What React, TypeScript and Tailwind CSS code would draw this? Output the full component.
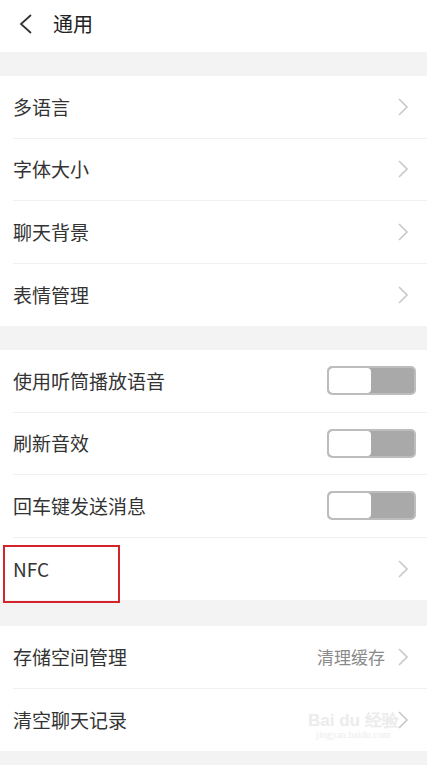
import React from "react";

const font = { fontFamily: '"Noto Sans CJK SC", "Noto Sans", sans-serif' };

function Chevron() {
  return (
    <svg width="12" height="20" viewBox="0 0 12 20" className="shrink-0">
      <path d="M2 2 L10 10 L2 18" fill="none" stroke="#c8c8c8" strokeWidth="1.6" />
    </svg>
  );
}

function Toggle() {
  return (
    <div className="flex h-[29px] w-[89px] overflow-hidden rounded-[5px] border-2 border-[#bdbdbd] bg-[#a9a9a9]">
      <div className="h-full w-[42px] rounded-[4px] bg-white" />
    </div>
  );
}

function Row({ label, right, last, children }: { label: string; right?: React.ReactNode; last?: boolean; children?: React.ReactNode }) {
  return (
    <div className="relative pl-[13px]">
      <div className={`flex h-[62.5px] items-center justify-between pr-[18px] ${last ? "" : "border-b border-[#f0f0f0]"}`}>
        <span className="text-[19px] text-[#333]">{label}</span>
        {right}
      </div>
      {children}
    </div>
  );
}

export default function App() {
  return (
    <div className="relative min-h-[765px] w-[427px] bg-[#f3f3f3]" style={font}>
      <div className="flex h-[52px] items-center bg-white pb-[4px] pl-[18px]">
        <svg width="16" height="22" viewBox="0 0 16 22">
          <path d="M13 2 L3 11 L13 20" fill="none" stroke="#333" strokeWidth="1.8" />
        </svg>
        <span className="ml-[19px] text-[20px] text-[#222]">通用</span>
      </div>
      <div className="h-[24px]" />
      <div className="bg-white">
        <Row label="多语言" right={<Chevron />} />
        <Row label="字体大小" right={<Chevron />} />
        <Row label="聊天背景" right={<Chevron />} />
        <Row label="表情管理" right={<Chevron />} last />
      </div>
      <div className="h-[24px]" />
      <div className="bg-white">
        <Row label="使用听筒播放语音" right={<div className="-mr-[7px]"><Toggle /></div>} />
        <Row label="刷新音效" right={<div className="-mr-[7px]"><Toggle /></div>} />
        <Row label="回车键发送消息" right={<div className="-mr-[7px]"><Toggle /></div>} />
        <Row label="NFC" right={<Chevron />} last>
          <div className="absolute left-[3px] top-[7px] h-[58px] w-[117px] border-2 border-[#d4232b]" />
        </Row>
      </div>
      <div className="h-[26px]" />
      <div className="bg-white">
        <Row
          label="存储空间管理"
          right={
            <div className="flex items-center gap-[12px]">
              <span className="text-[17px] text-[#8a8a8a]">清理缓存</span>
              <Chevron />
            </div>
          }
        />
        <Row label="清空聊天记录" right={<Chevron />} last />
      </div>
      <div className="pointer-events-none absolute left-[308px] top-[712px] flex flex-col items-center text-[#ececec]">
        <span className="text-[17px] font-bold leading-none" style={{ fontFamily: '"Liberation Sans", sans-serif' }}>Bai du 经验</span>
        <span className="text-[10px] leading-tight" style={{ fontFamily: '"Liberation Serif", serif' }}>jingyan.baidu.com</span>
      </div>
    </div>
  );
}
